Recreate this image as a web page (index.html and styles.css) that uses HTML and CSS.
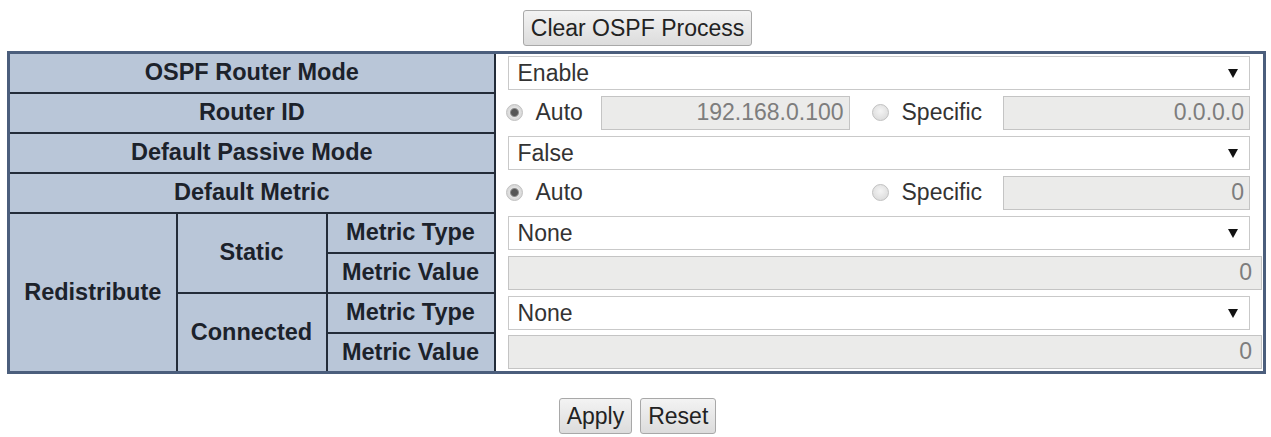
FILE: index.html
```html
<!DOCTYPE html>
<html lang="en">
<head>
  <meta charset="UTF-8" />
  <title>OSPF Configuration</title>
  <link rel="stylesheet" href="styles.css">
</head>
<body>
  <div class="top">
    <button class="btn">Clear OSPF Process</button>
  </div>

  <table class="cfg">
    <colgroup>
      <col class="c1"><col class="c2"><col class="c3"><col>
    </colgroup>
    <tr>
      <th colspan="3">OSPF Router Mode</th>
      <td><span class="sel"><select><option>Enable</option><option>Disable</option></select></span></td>
    </tr>
    <tr>
      <th colspan="3">Router ID</th>
      <td>
        <div class="choice">
          <label class="opt"><input type="radio" name="rid" checked>Auto</label>
          <input class="txt" type="text" value="192.168.0.100" disabled>
          <label class="opt spec"><input type="radio" name="rid">Specific</label>
          <input class="txt" type="text" value="0.0.0.0" disabled>
        </div>
      </td>
    </tr>
    <tr>
      <th colspan="3">Default Passive Mode</th>
      <td><span class="sel"><select><option>False</option><option>True</option></select></span></td>
    </tr>
    <tr>
      <th colspan="3">Default Metric</th>
      <td>
        <div class="choice">
          <label class="opt"><input type="radio" name="dm" checked>Auto</label>
          <span></span>
          <label class="opt spec"><input type="radio" name="dm">Specific</label>
          <input class="txt" type="text" value="0" disabled>
        </div>
      </td>
    </tr>
    <tr>
      <th rowspan="4">Redistribute</th>
      <th rowspan="2">Static</th>
      <th>Metric Type</th>
      <td><span class="sel"><select><option>None</option><option>Type 1</option><option>Type 2</option></select></span></td>
    </tr>
    <tr>
      <th>Metric Value</th>
      <td class="wide"><input class="txt" type="text" value="0" disabled></td>
    </tr>
    <tr>
      <th rowspan="2">Connected</th>
      <th>Metric Type</th>
      <td><span class="sel"><select><option>None</option><option>Type 1</option><option>Type 2</option></select></span></td>
    </tr>
    <tr>
      <th>Metric Value</th>
      <td class="wide"><input class="txt" type="text" value="0" disabled></td>
    </tr>
  </table>

  <div class="actions">
    <button class="btn">Apply</button>
    <button class="btn">Reset</button>
  </div>
</body>
</html>
```

FILE: styles.css
```css
body {
  font-family: 'Liberation Sans', Arial, sans-serif;
  font-size: 23px;
  color: #333;
  background: #fff;
  margin: 0;
  padding: 10px 0 0;
}

.top,
.actions {
  text-align: center;
  padding-left: 4px;
}

.actions {
  margin-top: 24px;
  display: flex;
  justify-content: center;
  gap: 8px;
}

.btn {
  font-family: inherit;
  font-size: 23px;
  color: #222;
  height: 36px;
  padding: 0 7px;
  background: linear-gradient(#f3f3f3, #dcdcdc);
  border: 1px solid #a8a8a8;
  border-radius: 3px;
}

.cfg {
  border-collapse: collapse;
  table-layout: fixed;
  width: calc(100% - 12px);
  margin: 5px 6px 0 7px;
  border: 3px solid #4b5e7c;
}

.c1 { width: 168px; }
.c2 { width: 150px; }
.c3 { width: 168px; }

.cfg tr {
  height: 40px;
}

.cfg th {
  background: #b9c6d8;
  color: #1c222b;
  font-size: 23.5px;
  font-weight: bold;
  text-align: center;
  border: 2px solid #232c39;
  padding: 0;
}

.cfg td {
  border: none;
  padding: 0 13px 0 12px;
  vertical-align: middle;
}

.sel {
  position: relative;
  display: block;
}

.sel select {
  appearance: none;
  -webkit-appearance: none;
  display: block;
  width: 100%;
  height: 34px;
  border: 1px solid #c9c9c9;
  border-radius: 0;
  background: #fff;
  font-family: inherit;
  font-size: 23px;
  color: #333;
  padding: 0 9px;
}

.sel::after {
  content: "";
  position: absolute;
  right: 12px;
  top: 13px;
  border-left: 5px solid transparent;
  border-right: 5px solid transparent;
  border-top: 9px solid #111;
  pointer-events: none;
}

.choice {
  display: grid;
  grid-template-columns: 93px 249px 1fr 247px;
  align-items: center;
}

.opt {
  display: flex;
  align-items: center;
  gap: 13px;
}

.opt.spec {
  margin-left: 24px;
}

.opt input {
  appearance: none;
  -webkit-appearance: none;
  width: 17px;
  height: 17px;
  margin: 0 0 0 -2px;
  border: 1px solid #c2c2c2;
  border-radius: 50%;
  background: radial-gradient(circle at 50% 40%, #f4f4f4, #d6d6d6);
}

.opt input:checked {
  background: radial-gradient(circle, #555 0 3px, #8a8a8a 4px, #e2e2e2 5px, #d4d4d4 8px);
}

.txt {
  box-sizing: border-box;
  width: 100%;
  height: 34px;
  border: 1px solid #c4c4c4;
  background: #ebebea;
  font-family: inherit;
  font-size: 23px;
  color: #7d7d7d;
  text-align: right;
  padding: 0 5px;
  margin: 0;
}

.wide .txt {
  width: calc(100% + 12px);
  padding-right: 9px;
}
```
